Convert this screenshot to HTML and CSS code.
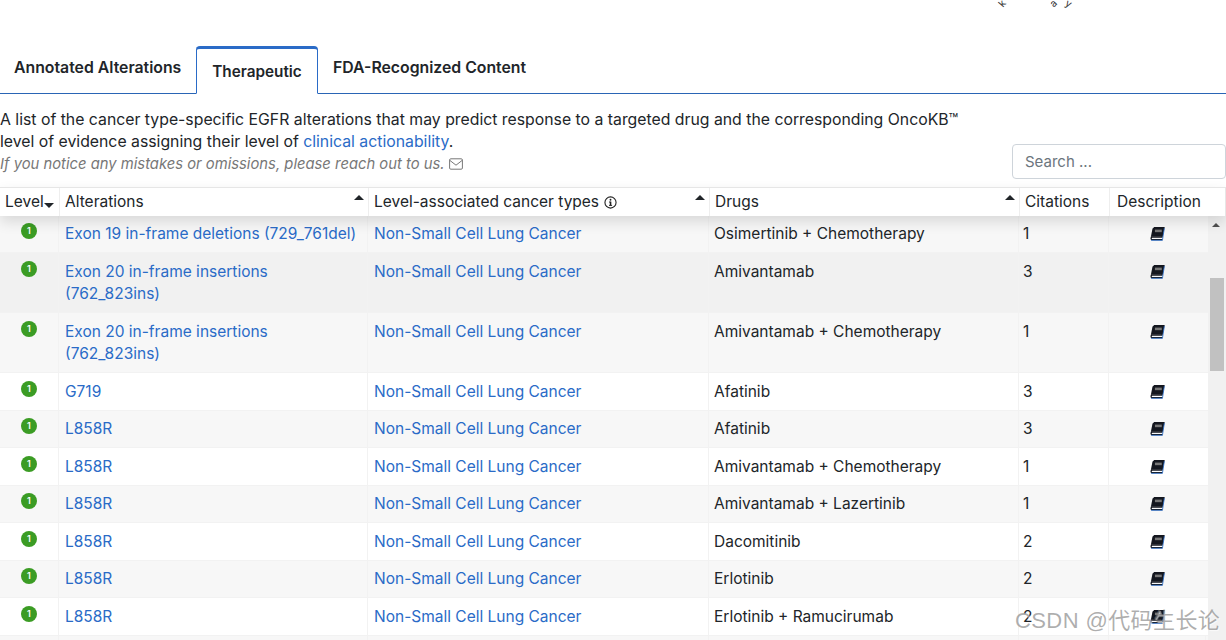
FILE: index.html
```html
<!DOCTYPE html>
<html lang="en">
<head>
<meta charset="utf-8">
<title>EGFR Therapeutic</title>
<link rel="stylesheet" href="styles.css">
</head>
<body>
<div class="logo-bits"><span class="b1">k</span><span class="b2">a</span><span class="b3">y</span></div>
<nav class="tabs">
  <a class="tab">Annotated Alterations</a>
  <a class="tab active">Therapeutic</a>
  <a class="tab">FDA-Recognized Content</a>
</nav>
<section class="intro">
  <div class="intro-text">
    <p>A list of the cancer type-specific EGFR alterations that may predict response to a targeted drug and the corresponding OncoKB™ level of evidence assigning their level of <a>clinical actionability</a>.</p>
    <p class="note">If you notice any mistakes or omissions, please reach out to us. <svg class="mail" viewBox="0 0 14 12" width="14" height="12"><rect x="0.6" y="0.8" width="12.8" height="10.4" rx="1.2" fill="none" stroke="#777" stroke-width="1"/><path d="M1 2.5 7 7.2 13 2.5" fill="none" stroke="#777" stroke-width="1"/></svg></p>
  </div>
  <input class="search" placeholder="Search ...">
</section>
<div class="table">
  <div class="thead">
    <div class="th lvl">Level<i class="caret"></i></div>
    <div class="th sort">Alterations</div>
    <div class="th sort">Level-associated cancer types <svg class="info" viewBox="0 0 14 14" width="13" height="13"><circle cx="7" cy="7" r="6" fill="none" stroke="#222" stroke-width="1.2"/><rect x="6.2" y="6" width="1.7" height="4.2" fill="#222"/><rect x="5.4" y="9.6" width="3.3" height="1" fill="#222"/><rect x="5.4" y="6" width="1.5" height="1" fill="#222"/><circle cx="7" cy="4" r="1" fill="#222"/></svg></div>
    <div class="th sort">Drugs</div>
    <div class="th">Citations</div>
    <div class="th">Description</div>
  </div>
  <div class="tbody">
    <div class="rows">
      <div class="row row-grid odd first"><div class="td"><b class="level">1</b></div><div class="td"><a>Exon 19 in-frame deletions (729_761del)</a></div><div class="td"><a>Non-Small Cell Lung Cancer</a></div><div class="td">Osimertinib + Chemotherapy</div><div class="td">1</div><div class="td c"><svg class="book" viewBox="0 0 14 13"><use href="#book"/></svg></div></div>
      <div class="row row-grid hover two"><div class="td"><b class="level">1</b></div><div class="td"><a>Exon 20 in-frame insertions (762_823ins)</a></div><div class="td"><a>Non-Small Cell Lung Cancer</a></div><div class="td">Amivantamab</div><div class="td">3</div><div class="td c"><svg class="book" viewBox="0 0 14 13"><use href="#book"/></svg></div></div>
      <div class="row row-grid odd two"><div class="td"><b class="level">1</b></div><div class="td"><a>Exon 20 in-frame insertions (762_823ins)</a></div><div class="td"><a>Non-Small Cell Lung Cancer</a></div><div class="td">Amivantamab + Chemotherapy</div><div class="td">1</div><div class="td c"><svg class="book" viewBox="0 0 14 13"><use href="#book"/></svg></div></div>
      <div class="row row-grid"><div class="td"><b class="level">1</b></div><div class="td"><a>G719</a></div><div class="td"><a>Non-Small Cell Lung Cancer</a></div><div class="td">Afatinib</div><div class="td">3</div><div class="td c"><svg class="book" viewBox="0 0 14 13"><use href="#book"/></svg></div></div>
      <div class="row row-grid odd"><div class="td"><b class="level">1</b></div><div class="td"><a>L858R</a></div><div class="td"><a>Non-Small Cell Lung Cancer</a></div><div class="td">Afatinib</div><div class="td">3</div><div class="td c"><svg class="book" viewBox="0 0 14 13"><use href="#book"/></svg></div></div>
      <div class="row row-grid"><div class="td"><b class="level">1</b></div><div class="td"><a>L858R</a></div><div class="td"><a>Non-Small Cell Lung Cancer</a></div><div class="td">Amivantamab + Chemotherapy</div><div class="td">1</div><div class="td c"><svg class="book" viewBox="0 0 14 13"><use href="#book"/></svg></div></div>
      <div class="row row-grid odd"><div class="td"><b class="level">1</b></div><div class="td"><a>L858R</a></div><div class="td"><a>Non-Small Cell Lung Cancer</a></div><div class="td">Amivantamab + Lazertinib</div><div class="td">1</div><div class="td c"><svg class="book" viewBox="0 0 14 13"><use href="#book"/></svg></div></div>
      <div class="row row-grid"><div class="td"><b class="level">1</b></div><div class="td"><a>L858R</a></div><div class="td"><a>Non-Small Cell Lung Cancer</a></div><div class="td">Dacomitinib</div><div class="td">2</div><div class="td c"><svg class="book" viewBox="0 0 14 13"><use href="#book"/></svg></div></div>
      <div class="row row-grid odd"><div class="td"><b class="level">1</b></div><div class="td"><a>L858R</a></div><div class="td"><a>Non-Small Cell Lung Cancer</a></div><div class="td">Erlotinib</div><div class="td">2</div><div class="td c"><svg class="book" viewBox="0 0 14 13"><use href="#book"/></svg></div></div>
      <div class="row row-grid"><div class="td"><b class="level">1</b></div><div class="td"><a>L858R</a></div><div class="td"><a>Non-Small Cell Lung Cancer</a></div><div class="td">Erlotinib + Ramucirumab</div><div class="td">2</div><div class="td c"><svg class="book" viewBox="0 0 14 13"><use href="#book"/></svg></div></div>
      <div class="row row-grid odd"><div class="td"></div><div class="td"></div><div class="td"></div><div class="td"></div><div class="td"></div><div class="td"></div></div>
    </div>
    <div class="scrollbar"><i class="up"></i><i class="thumb"></i></div>
  </div>
</div>
<div class="watermark">CSDN @代码生长论</div>
<svg class="defs" width="0" height="0"><defs><g id="book"><path d="M3.6 0.6H13L11.2 9.4H2.2C1.2 9.4 1 10.1 1 10.6C1 11.4 1.6 11.8 2.4 11.8H11.6" fill="none" stroke="#14171f" stroke-width="1.2"/><path d="M3.6 0.6H13L11.4 9H2C1.2 9 0.7 9.6 0.6 10.2L2.2 2C2.4 1.1 2.9 0.6 3.6 0.6Z" fill="#14171f"/><rect x="4.6" y="2.4" width="6.4" height="2.4" fill="#777"/><path d="M1 12.4H11.6L13.4 1" fill="none" stroke="#2b6cc4" stroke-width="0.8"/></g></defs></svg>
</body>
</html>
```
FILE: styles.css
```css
* { box-sizing: border-box; }
html, body { margin: 0; padding: 0; height: 640px; overflow: hidden; background: #fff; }
body { font-family: Inter, "Noto Sans CJK SC", sans-serif; font-size: 15.5px; color: #212529; position: relative; padding-top: 46px; }
a { color: #2a6bc7; text-decoration: none; }
.logo-bits { position: absolute; top: -3px; left: 996px; width: 90px; height: 10px; font-size: 10px; color: #333; }
.logo-bits span { position: absolute; top: 0; }
.b1 { left: 3px; transform: rotate(-50deg); }
.b2 { left: 54px; transform: rotate(-45deg); }
.b3 { left: 70px; transform: rotate(30deg); }
.tabs { display: flex; height: 48px; border-bottom: 1px solid #2a65b5; }
.tab { padding: 12px 14px 0; font-weight: 600; font-size: 15.8px; color: #212529; height: 48px; white-space: nowrap; }
.tab:first-child { width: 196px; }
.tab:last-child { padding-left: 15px; }
.tab.active { width: 122px; padding: 13px 0 0; font-size: 15.3px; text-align: center; border: 1px solid #2a6bc7; border-top: 3px solid #2a6bc7; border-bottom: 1px solid #fff; border-radius: 4px 4px 0 0; background: #fff; }
.intro { display: flex; justify-content: space-between; align-items: flex-end; height: 85px; margin-bottom: 8px; }
.intro-text { width: 966px; padding-top: 15px; line-height: 22px; font-size: 15.8px; align-self: flex-start; }
.intro-text p { margin: 0; }
.note { font-style: italic; color: #777; font-size: 14.8px; }
.mail { vertical-align: -1px; }
.search { width: 214px; height: 35px; border: 1px solid #ced4da; border-radius: 4px; padding: 0 12px; font: 15px Inter, sans-serif; background: #fff; outline: none; }
.search::placeholder { color: #6c757d; opacity: 1; }
.table { position: relative; }
.row-grid { display: grid; grid-template-columns: 59px 309px 341px 310px 90px 97px; }
.thead { display: grid; grid-template-columns: 60px 309px 341px 310px 90px 116px; height: 29px; border: 1px solid #e6e6e6; border-width: 1px 1px 0 0; box-shadow: 0 6px 14px rgba(0,0,0,.12); position: relative; z-index: 2; background: #fff; width: 1226px; }
.th { padding: 5px 5px 0; line-height: 18px; border-right: 1px solid #eee; position: relative; white-space: nowrap; }
.th:last-child { border-right: 0; padding-left: 7px; }
.th.lvl { padding-left: 5px; }
.th.sort::after { content: ""; position: absolute; right: 4px; top: 7px; border: 5px solid transparent; border-top: 0; border-bottom: 5px solid #212529; }
.caret { display: inline-block; border: 5px solid transparent; border-bottom: 0; border-top: 5px solid #212529; vertical-align: -1px; }
.info { vertical-align: -2px; margin-left: 1px; }
.tbody { display: flex; height: 424px; overflow: hidden; }
.rows { width: 1208px; flex: none; }
.row { height: 37.5px; background: #fff; border-bottom: 1px solid #f2f2f2; }
.row.odd { background: #f7f7f7; }
.row.hover { background: #f1f1f1; }
.row.two { height: 60px; }
.row.first { height: 37px; }
.td { padding: 7.5px 6px 0; line-height: 22px; border-right: 1px solid #f2f2f2; min-height: 100%; }
.first .td { padding-top: 7px; }
.td:first-child { text-align: center; padding: 7.5px 0 0; }
.first .td:first-child { padding-top: 7px; }
.td:nth-child(4) { padding-left: 5px; }
.td:nth-child(5) { padding-left: 4px; }
.td.c { border-right: 0; display: flex; justify-content: center; padding: 11.5px 0 0; }
.first .td.c { padding-top: 11px; }
.level { display: inline-block; width: 16px; height: 16px; border-radius: 50%; background: #3b9c24; color: #fff; font: 600 9px/16px Inter, sans-serif; text-align: center; vertical-align: top; }
.book { width: 15px; height: 14px; display: block; }
.scrollbar { flex: 1; background: #f1f1f1; position: relative; }
.up { position: absolute; left: 4px; top: 7px; border: 4px solid transparent; border-top: 0; border-bottom: 4px solid #505050; }
.thumb { position: absolute; left: 2px; right: 2px; top: 62px; height: 93px; background: #c1c1c1; }
.watermark { position: absolute; left: 1015px; top: 602px; font: 22px "Liberation Sans", "Noto Sans CJK SC", sans-serif; color: rgba(120,120,120,.6); white-space: nowrap; letter-spacing: .4px; text-shadow: 1px 1px 1px rgba(255,255,255,.7); }
.defs { position: absolute; }
```
